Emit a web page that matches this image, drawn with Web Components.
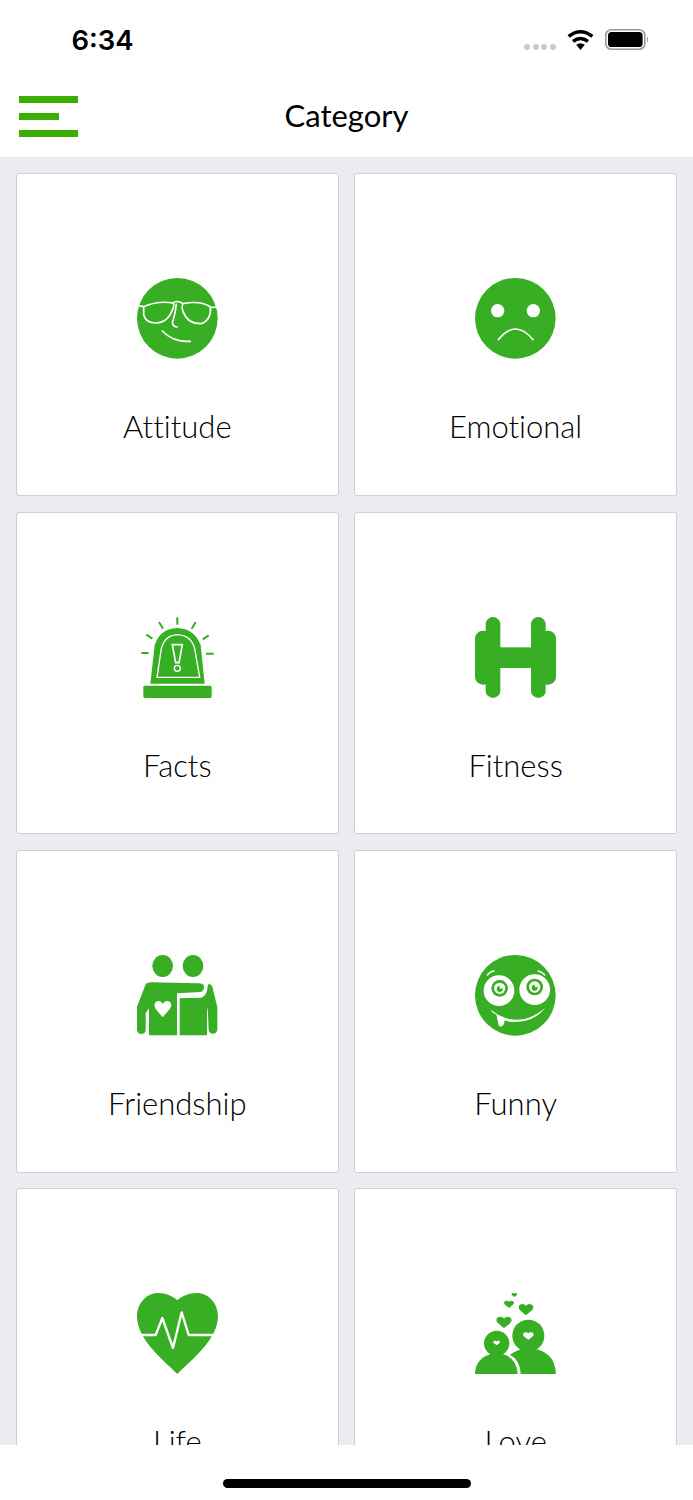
<!DOCTYPE html>
<html lang="en">
<head>
<title>Category</title>
<style>
  html, body { margin: 0; height: 1500px; background: #fff; }
  body { font-family: "Lato", "Liberation Sans", sans-serif; overflow: hidden; }
  app-screen svg { display: block; width: 81px; height: 81px; }
</style>
</head>
<body>

<app-screen>
  <status-bar slot="top"></status-bar>
  <nav-header slot="top">Category</nav-header>

  <category-grid>
    <category-card>
      <svg slot="icon" viewBox="52 39 243 243">
        <circle cx="173" cy="160" r="121" fill="#38ae24"/>
        <g fill="none" stroke="#fff" stroke-width="5" stroke-linecap="round" stroke-linejoin="round">
          <path d="M72 125Q115 106 160 114Q166 118 158 135Q145 172 110 174Q78 174 72 150Z"/>
          <path d="M190 116Q240 106 272 125Q276 165 245 176Q205 178 190 140Q185 122 190 116Z"/>
          <path d="M54 122L72 125M272 128L292 126M160 114Q173 104 190 116"/>
          <path d="M170 118Q165 155 158 172Q160 185 172 186"/>
          <path d="M128 198Q160 232 212 229"/>
        </g>
      </svg>
      Attitude
    </category-card>

    <category-card>
      <svg slot="icon" viewBox="61 39 243 243">
        <circle cx="182" cy="160" r="121" fill="#38ae24"/>
        <circle cx="129" cy="137" r="20" fill="#fff"/>
        <circle cx="236" cy="137" r="20" fill="#fff"/>
        <path d="M131 224Q182 160 235 224" fill="none" stroke="#fff" stroke-width="5" stroke-linecap="round"/>
      </svg>
      Emotional
    </category-card>

    <category-card>
      <svg slot="icon" viewBox="52 35 243 243">
        <path d="M92 235L105 120Q120 70 173 68Q225 70 243 120L255 235Z" fill="#38ae24"/>
        <rect x="71" y="241" width="205" height="37" rx="5" fill="#38ae24"/>
        <path d="M112 216L125 130Q135 90 173 88Q215 90 225 130L240 216Z" fill="none" stroke="#fff" stroke-width="4"/>
        <path d="M158 118L188 118L178 172L168 172Z" fill="none" stroke="#fff" stroke-width="5"/>
        <circle cx="173" cy="189" r="9" fill="none" stroke="#fff" stroke-width="4"/>
        <path d="M173 36V58M118 50L130 70M228 50L216 70M80 88L98 100M267 90L249 102M65 143H87M259 145H282" stroke="#38ae24" stroke-width="6" fill="none"/>
      </svg>
      Facts
    </category-card>

    <category-card>
      <svg slot="icon" viewBox="60 34 243 243">
        <g fill="#38ae24">
          <rect x="92" y="34" width="44" height="243" rx="22"/>
          <rect x="228" y="34" width="44" height="243" rx="22"/>
          <rect x="60" y="75" width="50" height="162" rx="24"/>
          <rect x="253" y="75" width="50" height="162" rx="24"/>
          <rect x="130" y="125" width="104" height="62"/>
        </g>
      </svg>
      Fitness
    </category-card>

    <category-card>
      <svg slot="icon" viewBox="52 30 243 243">
        <g fill="#38ae24">
          <ellipse cx="129" cy="63" rx="31" ry="33"/>
          <ellipse cx="220" cy="63" rx="31" ry="33"/>
          <path d="M78 118L52 185V255Q55 268 66 267Q78 265 78 255V205L88 190V271H172V145L243 141Q256 136 252 120Q247 114 235 115L95 112Q82 112 78 118Z"/>
          <path d="M180 271V160L245 158Q262 154 265 118Q275 116 278 125L293 187V255Q289 268 278 266Q268 265 267 255L265 205L262 184V271Z"/>
        </g>
        <path d="M129 217L108 192Q98 172 115 168Q125 167 129 176Q135 166 145 168Q160 172 152 190Z" fill="#fff"/>
      </svg>
      Friendship
    </category-card>

    <category-card>
      <svg slot="icon" viewBox="61 30 243 243">
        <circle cx="182" cy="151" r="121" fill="#38ae24"/>
        <circle cx="133" cy="137" r="46" fill="#fff"/>
        <circle cx="240" cy="134" r="46" fill="#fff"/>
        <g fill="#38ae24">
          <circle cx="135" cy="130" r="25"/>
          <circle cx="240" cy="126" r="25"/>
        </g>
        <circle cx="135" cy="130" r="17" fill="#fff"/>
        <circle cx="240" cy="126" r="17" fill="#fff"/>
        <circle cx="135" cy="132" r="9" fill="#38ae24"/>
        <circle cx="240" cy="128" r="9" fill="#38ae24"/>
        <circle cx="139" cy="127" r="4" fill="#fff"/>
        <circle cx="244" cy="123" r="4" fill="#fff"/>
        <path d="M98 90Q105 80 118 78M250 78Q262 80 270 90" fill="none" stroke="#fff" stroke-width="4" stroke-linecap="round"/>
        <path d="M108 194Q190 258 272 188Q235 236 165 230L150 226Q150 238 143 243Q134 248 131 238L125 208Q112 204 108 194Z" fill="#fff"/>
      </svg>
      Funny
    </category-card>

    <category-card>
      <svg slot="icon" viewBox="52 25 243 243">
        <path d="M173 268C130 225 52 165 52 95C52 55 82 25 115 25C140 25 160 35 173 47C186 35 206 25 232 25C265 25 295 55 295 95C295 165 216 225 173 268Z" fill="#38ae24"/>
        <path d="M62 151H108L128 100L160 190L186 83L207 151H286" fill="none" stroke="#fff" stroke-width="7" stroke-linejoin="round"/>
      </svg>
      Life
    </category-card>

    <category-card>
      <svg slot="icon" viewBox="60 25 243 243">
        <defs>
          <path id="h" d="M0 .85C-.5 .4 -1 .05 -1 -.35C-1 -.7 -.7 -.85 -.45 -.85C-.25 -.85 -.1 -.72 0 -.55C.1 -.72 .25 -.85 .45 -.85C.7 -.85 1 -.7 1 -.35C1 .05 .5 .4 0 .85Z"/>
        </defs>
        <g fill="#38ae24">
          <use href="#h" transform="translate(178 31) scale(8.5 7)"/>
          <use href="#h" transform="translate(162 59) scale(15 13)"/>
          <use href="#h" transform="translate(213 75) scale(22 20)"/>
          <use href="#h" transform="translate(147 113) scale(23 20)"/>
          <circle cx="125" cy="176" r="38"/>
          <circle cx="220" cy="153" r="48"/>
          <path d="M60 268Q62 212 125 205Q185 210 188 268Z"/>
          <path d="M197 268H303Q300 195 220 190Q190 192 165 210Q195 225 197 268Z"/>
        </g>
        <g fill="#fff">
          <use href="#h" transform="translate(125 175) scale(10 8)"/>
          <use href="#h" transform="translate(220 154) scale(16 13)"/>
        </g>
      </svg>
      Love
    </category-card>
  </category-grid>

  <home-indicator slot="bottom"></home-indicator>
</app-screen>

<script>
  class AppScreen extends HTMLElement {
    constructor() {
      super();
      const shadow = this.attachShadow({ mode: 'open' });
      shadow.innerHTML = `
        <style>
          :host { display: flex; flex-direction: column; height: 1500px; background: #ebebf1; }
          main { flex: 1; min-height: 0; overflow: hidden; }
        </style>
        <slot name="top"></slot>
        <main><slot></slot></main>
        <slot name="bottom"></slot>
      `;
    }
  }

  class StatusBar extends HTMLElement {
    constructor() {
      super();
      const shadow = this.attachShadow({ mode: 'open' });
      shadow.innerHTML = `
        <style>
          :host { display: flex; align-items: flex-start; height: 72px; background: #fff; color: #000; }
          .time { margin: 22px 0 0 71.5px; font: 600 27.5px/36px "Inter", "Liberation Sans", sans-serif; }
          .icons { margin: 29px 43px 0 auto; display: flex; align-items: flex-start; }
          .dots { display: flex; gap: 2.6px; margin: 15px 11px 0 0; }
          .dots i { width: 6px; height: 6px; border-radius: 50%; background: #cbcbcb; }
          svg { display: block; }
          .wifi { margin-right: 11px; }
        </style>
        <div class="time">6:34</div>
        <div class="icons">
          <div class="dots"><i></i><i></i><i></i><i></i></div>
          <svg class="wifi" width="27" height="21" viewBox="0 0 27 21">
            <path d="M13.5 21L9.2 15.8Q13.5 12.6 17.8 15.8Z"/>
            <path d="M1.6 7.4Q13.5 -2 25.4 7.4" fill="none" stroke="#000" stroke-width="3.4"/>
            <path d="M6 12.4Q13.5 6.4 21 12.4" fill="none" stroke="#000" stroke-width="3.4"/>
          </svg>
          <svg width="45" height="21" viewBox="0 0 45 21">
            <rect x=".8" y=".8" width="39" height="19.4" rx="5.5" fill="none" stroke="#999" stroke-width="1.6"/>
            <rect x="3" y="3" width="34.6" height="15" rx="3.6"/>
            <path d="M42 7.5Q44.5 10.5 42 13.5Z" fill="#999"/>
          </svg>
        </div>
      `;
    }
  }

  class NavHeader extends HTMLElement {
    constructor() {
      super();
      const shadow = this.attachShadow({ mode: 'open' });
      shadow.innerHTML = `
        <style>
          :host { display: grid; grid-template-columns: 1fr auto 1fr; align-items: start; height: 85px; background: #fff; color: #000; }
          .menu { display: flex; flex-direction: column; gap: 10px; margin: 24px 0 0 19px; }
          .menu i { display: block; width: 59px; height: 7px; background: #3bae05; }
          .menu i:nth-child(2) { width: 40px; }
          .title { font: 400 31px/40px "Lato", "Liberation Sans", sans-serif; margin-top: 23px; }
        </style>
        <div class="menu"><i></i><i></i><i></i></div>
        <div class="title"><slot></slot></div>
        <div></div>
      `;
    }
  }

  class CategoryGrid extends HTMLElement {
    constructor() {
      super();
      const shadow = this.attachShadow({ mode: 'open' });
      shadow.innerHTML = `
        <style>
          :host { display: grid; grid-template-columns: 1fr 1fr; gap: 15.6px; padding: 16.4px 16px 16px; }
        </style>
        <slot></slot>
      `;
    }
  }

  class CategoryCard extends HTMLElement {
    constructor() {
      super();
      const shadow = this.attachShadow({ mode: 'open' });
      shadow.innerHTML = `
        <style>
          :host {
            display: flex; flex-direction: column; align-items: center;
            box-sizing: border-box; aspect-ratio: 1; padding-top: 104px;
            background: #fff; border: 1px solid #cfcfd3; border-radius: 3px;
            color: #000; font: 300 31px/40px "Lato", "Liberation Sans", sans-serif;
            font-variant-ligatures: none;
          }
          .label { margin-top: 47px; }
        </style>
        <slot name="icon"></slot>
        <div class="label"><slot></slot></div>
      `;
    }
  }

  class HomeIndicator extends HTMLElement {
    constructor() {
      super();
      const shadow = this.attachShadow({ mode: 'open' });
      shadow.innerHTML = `
        <style>
          :host { display: flex; justify-content: center; height: 55px; background: #fff; }
          div { width: 248px; height: 9px; margin-top: 34px; border-radius: 5px; background: #000; }
        </style>
        <div></div>
      `;
    }
  }

  customElements.define('app-screen', AppScreen);
  customElements.define('status-bar', StatusBar);
  customElements.define('nav-header', NavHeader);
  customElements.define('category-grid', CategoryGrid);
  customElements.define('category-card', CategoryCard);
  customElements.define('home-indicator', HomeIndicator);
</script>

</body>
</html>
